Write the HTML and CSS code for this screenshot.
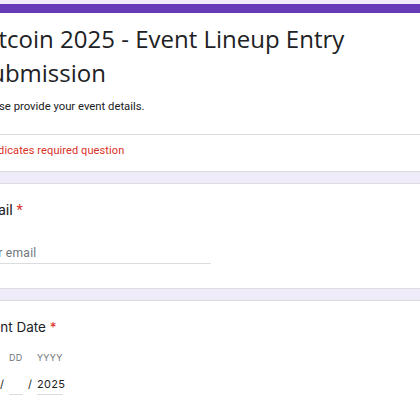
FILE: index.html
```html
<!DOCTYPE html>
<html lang="en">
<head>
<meta charset="utf-8">
<title>Bitcoin 2025 - Event Lineup Entry Submission</title>
<link rel="stylesheet" href="styles.css">
</head>
<body>
<main class="page">
  <section class="card header-card">
    <h1 class="form-title">Bitcoin 2025 - Event Lineup Entry Submission</h1>
    <p class="form-desc">Please provide your event details.</p>
    <div class="divider"></div>
    <p class="required-note"><span class="note-star">*</span>Indicates required question</p>
  </section>

  <section class="card question">
    <div class="q-label">Email <span class="req">*</span></div>
    <div class="text-input"><span class="placeholder">Your email</span></div>
  </section>

  <section class="card question date-card">
    <div class="q-label">Event Date <span class="req">*</span></div>
    <div class="date-row">
      <div class="date-field mm">
        <span class="date-sub">MM</span>
        <span class="date-input"></span>
      </div>
      <span class="date-sep">/</span>
      <div class="date-field dd">
        <span class="date-sub">DD</span>
        <span class="date-input"></span>
      </div>
      <span class="date-sep">/</span>
      <div class="date-field yyyy">
        <span class="date-sub">YYYY</span>
        <span class="date-input">2025</span>
      </div>
    </div>
  </section>
</main>
</body>
</html>
```

FILE: styles.css
```css
html, body {
  margin: 0;
  padding: 0;
  background: #f0ebf8;
  overflow: hidden;
  height: 420px;
}

body {
  font-family: Roboto, "Liberation Sans", Arial, sans-serif;
  color: #202124;
}

.page {
  margin-left: -48px;
  width: 500px;
  padding-top: 4px;
  display: flex;
  flex-direction: column;
  gap: 11px;
}

.card {
  background: #fff;
  border: 1px solid #dadce0;
  border-radius: 8px;
  padding-left: 24px;
  padding-right: 24px;
}

.header-card {
  border-top: 9px solid #673ab7;
  border-radius: 8px;
  padding-top: 9px;
  padding-bottom: 12px;
}

.form-title {
  margin: 0;
  font-family: "Open Sans", Roboto, sans-serif;
  font-weight: 400;
  font-size: 24px;
  line-height: 34px;
  color: #202124;
}

.form-desc {
  margin: 9px 0 0;
  font-size: 11.3px;
  line-height: 16px;
  color: #202124;
}

.divider {
  margin: 19px -24px 0;
  height: 1px;
  background: #dadce0;
}

.required-note {
  margin: 8px 0 0;
  font-size: 11px;
  line-height: 16px;
  color: #d93025;
  letter-spacing: 0.1px;
}

.note-star {
  margin-right: 7px;
}

.question {
  padding-top: 17px;
  padding-bottom: 24px;
}

.q-label {
  font-size: 14.5px;
  line-height: 20px;
  color: #202124;
}

.req {
  color: #d93025;
}

.text-input {
  margin-top: 24px;
  width: 234px;
  border-bottom: 1px solid #dadce0;
  padding-bottom: 2px;
  font-size: 12px;
  line-height: 16px;
  letter-spacing: 0.3px;
}

.placeholder {
  color: #70757a;
}

.date-card {
  padding-top: 16px;
  padding-bottom: 40px;
}

.date-card .q-label {
  font-family: Inter, Roboto, sans-serif;
  font-size: 13.5px;
}

.date-row {
  margin-top: 14px;
  display: flex;
  align-items: flex-end;
  gap: 5px;
  font-family: Inter, Roboto, sans-serif;
}

.date-field {
  display: flex;
  flex-direction: column;
  gap: 11px;
}

.date-field.mm {
  width: 18px;
}

.date-field.dd {
  width: 14px;
}

.date-field.yyyy {
  width: 26px;
}

.date-sub {
  font-size: 9px;
  line-height: 14px;
  color: #70757a;
  letter-spacing: 0.3px;
}

.date-input {
  height: 16px;
  font-size: 11px;
  line-height: 16px;
  color: #202124;
  border-bottom: 1px solid #dadce0;
  padding-bottom: 2px;
  letter-spacing: 0.3px;
}

.date-sep {
  font-size: 11px;
  line-height: 16px;
  padding-bottom: 3px;
  color: #202124;
}
```
